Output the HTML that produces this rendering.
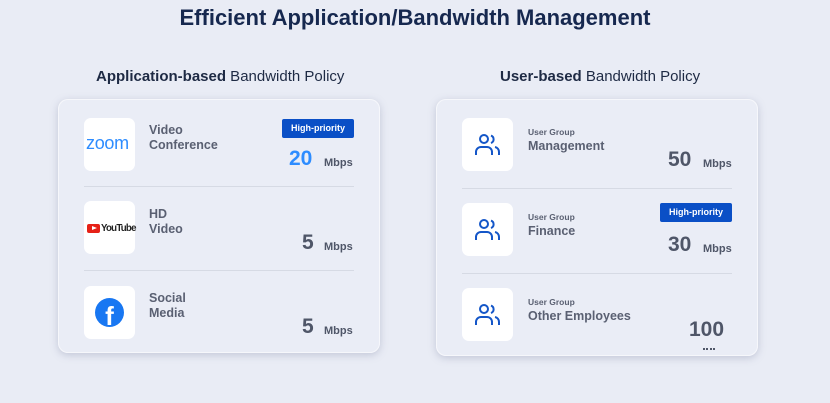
<!DOCTYPE html>
<html><head><style>
*{margin:0;padding:0;box-sizing:border-box}
body{width:830px;height:403px;background:#e9ecf5;font-family:"Liberation Sans",sans-serif;position:relative;overflow:hidden;color:#525a6c}
.a{position:absolute}
h1{position:absolute;top:5px;left:0;width:830px;text-align:center;font-size:22px;color:#16284f;font-weight:bold}
.sub{font-size:15px;color:#1e2a44;top:68px}
.card{background:#eaedf6;border-radius:10px;box-shadow:0 2px 8px rgba(120,130,160,.35),inset 0 0 0 1px #f6f7fb}
.ic{background:#fff;border-radius:7px;width:51px;height:53px}
.t{font-weight:bold;font-size:12.5px;line-height:15px;color:#5a6072}
.div{height:1px;background:#d6dae4}
.badge{background:#0a4fc6;color:#fff;font-size:9px;font-weight:bold;border-radius:2px;text-align:center;line-height:19px;width:72px;height:19px}
.n{font-weight:bold;font-size:21px;color:#4f5668}
.m{font-weight:bold;font-size:11px;color:#4f5668}
.s{font-size:8.5px;font-weight:bold;color:#5a6072}
</style></head><body>
<h1>Efficient Application/Bandwidth Management</h1>
<div class="a sub" style="left:96px"><b>Application-based</b> Bandwidth Policy</div>
<div class="a sub" style="left:500px"><b>User-based</b> Bandwidth Policy</div>

<div class="a card" style="left:58px;top:99px;width:322px;height:254px"></div>
<div class="a ic" style="left:84px;top:118px"></div>
<div class="a" style="left:86px;top:133px;font-size:18px;color:#2d8cff;letter-spacing:-0.3px">zoom</div>
<div class="a t" style="left:149px;top:123px">Video<br>Conference</div>
<div class="a badge" style="left:282px;top:119px">High-priority</div>
<div class="a n" style="left:289px;top:147px;color:#2d8cff">20</div>
<div class="a m" style="left:324px;top:157px">Mbps</div>
<div class="a div" style="left:84px;top:186px;width:270px"></div>

<div class="a ic" style="left:84px;top:201px"></div>
<div class="a" style="left:87px;top:224px;width:13px;height:9px;background:#e62117;border-radius:2px"></div>
<div class="a" style="left:92px;top:226px;width:0;height:0;border-left:5px solid #fff;border-top:2.5px solid transparent;border-bottom:2.5px solid transparent"></div>
<div class="a" style="left:101px;top:222px;font-size:10.5px;font-weight:bold;color:#222;letter-spacing:-0.8px;transform:scaleX(.92);transform-origin:left">YouTube</div>
<div class="a t" style="left:149px;top:207px">HD<br>Video</div>
<div class="a n" style="left:302px;top:231px">5</div>
<div class="a m" style="left:324px;top:241px">Mbps</div>
<div class="a div" style="left:84px;top:270px;width:270px"></div>

<div class="a ic" style="left:84px;top:286px"></div>
<div class="a" style="left:95px;top:298px;width:29px;height:29px;border-radius:50%;background:#1877f2;color:#fff;font-weight:bold;font-size:26px;text-align:center;line-height:36px;overflow:hidden">f</div>
<div class="a t" style="left:149px;top:291px">Social<br>Media</div>
<div class="a n" style="left:302px;top:315px">5</div>
<div class="a m" style="left:324px;top:325px">Mbps</div>

<div class="a card" style="left:436px;top:99px;width:322px;height:257px"></div>
<div class="a ic" style="left:462px;top:118px"></div>
<div class="a ic" style="left:462px;top:203px"></div>
<div class="a ic" style="left:462px;top:288px"></div>
<svg class="a" style="left:474px;top:133px" width="28" height="24" viewBox="0 0 28 24" fill="none" stroke="#1456c8" stroke-width="2"><circle cx="10" cy="6" r="4"/><path d="M2 22v-3a5 5 0 0 1 5-5h6a5 5 0 0 1 5 5v3"/><path d="M17 2.5a4 4 0 0 1 0 7.5M21 14a5 5 0 0 1 4 5v3"/></svg>
<svg class="a" style="left:474px;top:218px" width="28" height="24" viewBox="0 0 28 24" fill="none" stroke="#1456c8" stroke-width="2"><circle cx="10" cy="6" r="4"/><path d="M2 22v-3a5 5 0 0 1 5-5h6a5 5 0 0 1 5 5v3"/><path d="M17 2.5a4 4 0 0 1 0 7.5M21 14a5 5 0 0 1 4 5v3"/></svg>
<svg class="a" style="left:474px;top:303px" width="28" height="24" viewBox="0 0 28 24" fill="none" stroke="#1456c8" stroke-width="2"><circle cx="10" cy="6" r="4"/><path d="M2 22v-3a5 5 0 0 1 5-5h6a5 5 0 0 1 5 5v3"/><path d="M17 2.5a4 4 0 0 1 0 7.5M21 14a5 5 0 0 1 4 5v3"/></svg>

<div class="a s" style="left:528px;top:127px">User Group</div>
<div class="a t" style="left:528px;top:139px">Management</div>
<div class="a n" style="left:668px;top:148px">50</div>
<div class="a m" style="left:703px;top:158px">Mbps</div>
<div class="a div" style="left:462px;top:188px;width:270px"></div>

<div class="a s" style="left:528px;top:212px">User Group</div>
<div class="a t" style="left:528px;top:224px">Finance</div>
<div class="a badge" style="left:660px;top:203px">High-priority</div>
<div class="a n" style="left:668px;top:233px">30</div>
<div class="a m" style="left:703px;top:243px">Mbps</div>
<div class="a div" style="left:462px;top:273px;width:270px"></div>

<div class="a s" style="left:528px;top:297px">User Group</div>
<div class="a t" style="left:528px;top:309px">Other Employees</div>
<div class="a n" style="left:689px;top:318px">100</div>
<div class="a" style="left:703px;top:348px;width:12px;height:3px;border-top:2px dotted #4f5668"></div>
</body></html>
